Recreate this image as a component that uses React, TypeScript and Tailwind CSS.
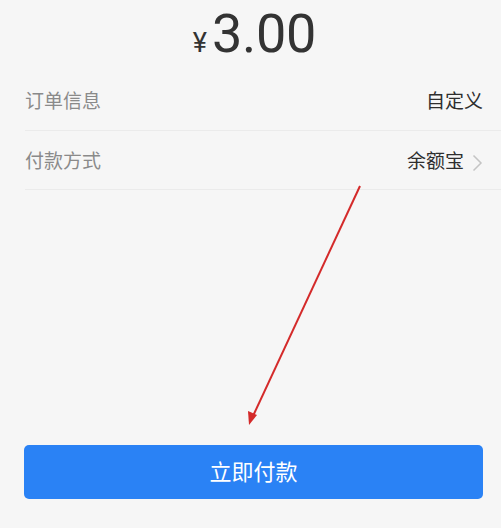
import React from "react";

export default function App() {
  return (
    <div
      className="relative w-[501px] h-[528px] bg-[#f6f6f6] overflow-hidden flex flex-col"
      style={{ fontFamily: '"Roboto", "Noto Sans CJK SC", sans-serif' }}
    >
      <div className="h-[74px] flex items-start justify-center pt-[5px] pl-[8px]">
        <div className="flex items-baseline text-[#333]">
          <span className="text-[27px] leading-none mr-[5px]">¥</span>
          <span className="text-[54px] leading-[58px] tracking-[-0.3px]">3.00</span>
        </div>
      </div>
      <div className="pl-[25px]">
        <div className="h-[57px] flex items-center justify-between pr-[18px] border-b border-[#ebebeb]">
          <span className="text-[19px] text-[#8a8a8a]">订单信息</span>
          <span className="text-[19px] text-[#2e2e2e]">自定义</span>
        </div>
        <div className="h-[59px] flex items-center justify-between pr-[18px] border-b border-[#ebebeb]">
          <span className="text-[19px] text-[#8a8a8a] pt-[5px]">付款方式</span>
          <span className="flex items-center text-[19px] text-[#2e2e2e] pt-[5px]">
            余额宝
            <svg className="ml-[8px]" width="11" height="18" viewBox="0 0 11 18" fill="none">
              <path d="M1.5 1.5 L9 9 L1.5 16.5" stroke="#c4c4c4" strokeWidth="1.5" />
            </svg>
          </span>
        </div>
      </div>
      <div className="flex-1" />
      <div className="px-[24px] pr-[18px] mb-[29px]">
        <button className="w-full h-[54px] rounded-[5px] bg-[#2a82f5] text-white text-[22px] flex items-center justify-center">
          立即付款
        </button>
      </div>
      <svg className="absolute left-0 top-0 pointer-events-none" width="501" height="528">
        <line x1="360" y1="186" x2="253" y2="416" stroke="#d42a2a" strokeWidth="2" />
        <polygon points="249,425 248,411 257,415" fill="#d42a2a" />
      </svg>
    </div>
  );
}
